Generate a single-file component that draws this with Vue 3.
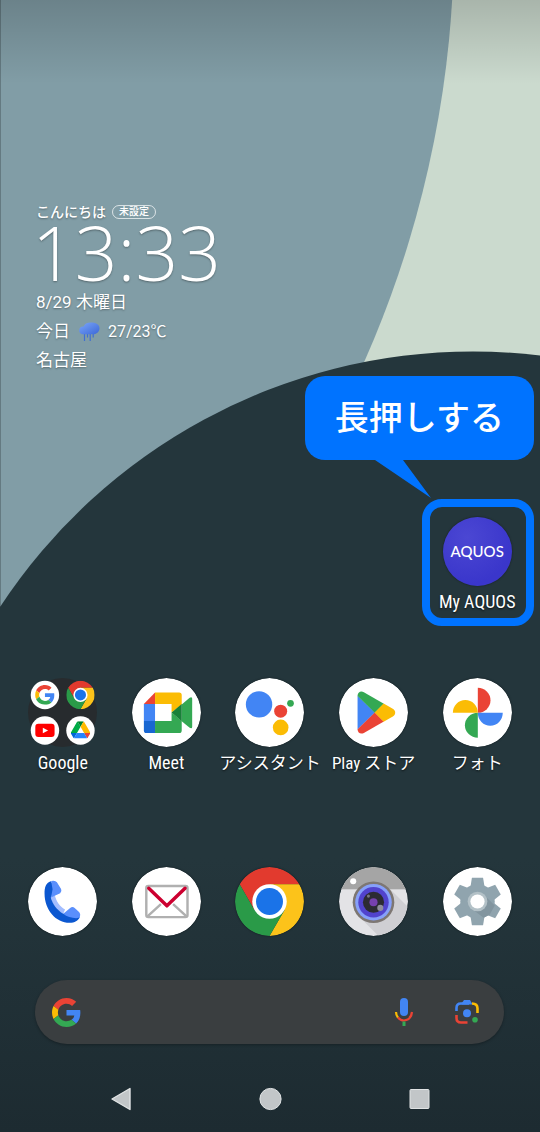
<script setup>
const gPaths = [
  { fill: '#ea4335', d: 'M24 9.5c3.54 0 6.71 1.22 9.21 3.6l6.85-6.85C35.9 2.38 30.47 0 24 0 14.62 0 6.51 5.38 2.56 13.22l7.98 6.19C12.43 13.72 17.74 9.5 24 9.5z' },
  { fill: '#4285f4', d: 'M46.98 24.55c0-1.57-.15-3.09-.38-4.55H24v9.02h12.94c-.58 2.96-2.26 5.48-4.78 7.18l7.73 6c4.51-4.18 7.09-10.36 7.09-17.65z' },
  { fill: '#fbbc05', d: 'M10.53 28.59c-.48-1.45-.76-2.99-.76-4.59s.27-3.14.76-4.59l-7.98-6.19C.92 16.46 0 20.12 0 24c0 3.88.92 7.54 2.56 10.78l7.97-6.19z' },
  { fill: '#34a853', d: 'M24 48c6.48 0 11.93-2.13 15.89-5.81l-7.73-6c-2.15 1.45-4.92 2.3-8.16 2.3-6.26 0-11.57-4.22-13.47-9.91l-7.98 6.19C6.51 42.62 14.62 48 24 48z' },
]
const drivePaths = [
  { fill: '#0066da', d: 'm6.6 66.85 3.85 6.65c.8 1.4 1.95 2.5 3.3 3.3l13.75-23.8h-27.5c0 1.55.4 3.1 1.2 4.5z' },
  { fill: '#00ac47', d: 'm43.65 25-13.75-23.8c-1.35.8-2.5 1.9-3.3 3.3l-25.4 44a9.06 9.06 0 0 0 -1.2 4.5h27.5z' },
  { fill: '#ea4335', d: 'm73.55 76.8c1.35-.8 2.5-1.9 3.3-3.3l1.6-2.75 7.65-13.25c.8-1.4 1.2-2.95 1.2-4.5h-27.502l5.852 11.5z' },
  { fill: '#00832d', d: 'm43.65 25 13.75-23.8c-1.35-.8-2.9-1.2-4.5-1.2h-18.5c-1.6 0-3.15.45-4.5 1.2z' },
  { fill: '#2684fc', d: 'm59.8 53h-32.3l-13.75 23.8c1.35.8 2.9 1.2 4.5 1.2h50.8c1.6 0 3.15-.45 4.5-1.2z' },
  { fill: '#ffba00', d: 'm73.4 26.5-12.7-22c-.8-1.4-1.95-2.5-3.3-3.3l-13.75 23.8 16.15 28h27.45c0-1.55-.4-3.1-1.2-4.5z' },
]
</script>

<template>
  <main class="screen">
    <svg class="wallpaper" viewBox="0 0 540 1132" preserveAspectRatio="xMidYMin slice" aria-hidden="true">
      <defs>
        <linearGradient id="dark" x1="0" y1="350" x2="0" y2="1132" gradientUnits="userSpaceOnUse">
          <stop offset="0" stop-color="#24363c" />
          <stop offset=".65" stop-color="#24363c" />
          <stop offset="1" stop-color="#1d2b31" />
        </linearGradient>
        <linearGradient id="scrim" x1="0" y1="0" x2="0" y2="1">
          <stop offset="0" stop-color="#000" stop-opacity=".17" />
          <stop offset="1" stop-color="#000" stop-opacity="0" />
        </linearGradient>
      </defs>
      <rect width="540" height="1132" fill="#cbdace" />
      <circle cx="-591" cy="-62" r="1045" fill="#819da6" />
      <path d="M0 607A566 566 0 0 1 473 351.500A566 566 0 0 1 540 355.500V1132H0z" fill="url(#dark)" />
      <rect width="540" height="84" fill="url(#scrim)" />
      <rect width="1" height="607" fill="#000" fill-opacity=".22" />
    </svg>

    <section class="widget" aria-label="時計と天気">
      <div class="greeting">
        <span>こんにちは</span>
        <button type="button" class="pill">未設定</button>
      </div>
      <time class="time">13:33</time>
      <p class="line">8/29 木曜日</p>
      <p class="line weather">
        <span>今日</span>
        <svg width="22" height="20" viewBox="0 0 22 20" aria-hidden="true">
          <defs>
            <linearGradient id="cloud" x1="0" y1="0" x2="1" y2="1">
              <stop offset="0" stop-color="#7ba6f8" />
              <stop offset="1" stop-color="#3c68d8" />
            </linearGradient>
          </defs>
          <path d="M6.500 9v10M9.500 9v6.500M12.200 9v10M15.200 9v6.500" stroke="#3f6fd2" stroke-width="1.200" />
          <path d="M4 12.300A4 4 0 0 1 4.300 4.600C5.300 5 5.500 4.600 6 3.700C7.200 1.300 9.500 .5 12.500 .5C18 .5 21.500 2.500 21.500 6C21.500 10 18.500 12.300 14.500 12.300z" fill="url(#cloud)" />
        </svg>
        <span class="temp">27/23℃</span>
      </p>
      <p class="line">名古屋</p>
    </section>

    <section class="row pinned" aria-label="My AQUOS">
      <div class="target">
        <button type="button" class="app">
          <span class="icon aquos">AQUOS</span>
          <span class="label">My AQUOS</span>
        </button>
        <div class="frame"></div>
        <div class="callout" role="note">
          長押しする
          <svg class="tail" width="56" height="39" viewBox="0 0 56 39" aria-hidden="true">
            <path d="M0 0V1L56 39L28 1V0z" fill="#0073ff" />
          </svg>
        </div>
      </div>
    </section>

    <nav class="row apps" aria-label="アプリ">
      <button type="button" class="app">
        <svg class="icon folder" viewBox="0 0 68 68" aria-hidden="true">
          <circle cx="34" cy="34" r="34" fill="#272b2e" />
          <circle cx="16.700" cy="16.700" r="14" fill="#fff" />
          <svg x="7" y="7" width="19.400" height="19.400" viewBox="0 0 48 48">
            <path v-for="p in gPaths" :key="p.fill" :fill="p.fill" :d="p.d" />
          </svg>
          <svg x="37.700" y="2.700" width="28" height="28" viewBox="0 0 68 68">
            <path d="M4.600 17A34 34 0 0 1 63.400 17H34L19.300 42.500z" fill="#e23a2e" />
            <path d="M63.400 17A34 34 0 0 1 34 68L48.700 42.500L34 17z" fill="#fcc31a" />
            <path d="M34 68A34 34 0 0 1 4.600 17L19.300 42.500H48.700z" fill="#2a9a48" />
            <circle cx="34" cy="34" r="17" fill="#fff" />
            <circle cx="34" cy="34" r="13.300" fill="#1a73e8" />
          </svg>
          <circle cx="16.700" cy="51.700" r="14" fill="#fff" />
          <rect x="7.200" y="45.200" width="19" height="13" rx="3" fill="#f00" />
          <path d="M14.600 49L19.800 51.700L14.600 54.400z" fill="#fff" />
          <circle cx="51.700" cy="51.700" r="14" fill="#fff" />
          <svg x="42.300" y="42.600" width="19" height="17" viewBox="0 0 87.3 78">
            <path v-for="p in drivePaths" :key="p.fill" :fill="p.fill" :d="p.d" />
          </svg>
        </svg>
        <span class="label">Google</span>
      </button>

      <button type="button" class="app">
        <svg class="icon" viewBox="0 0 68 68" aria-hidden="true">
          <circle cx="34" cy="34" r="34" fill="#fff" />
          <path d="M22.700 14.300V25.700H11.700z" fill="#ea4335" />
          <path d="M22.700 14.300H46.500Q49 14.300 49 16.800V26L39 34V25.700H22.700z" fill="#fbbc04" />
          <path d="M11.700 25.700H22.700V42.300H11.700z" fill="#4285f4" />
          <path d="M11.700 42.300H22.700V54.300H14.200Q11.700 54.300 11.700 51.800z" fill="#1967d2" />
          <path d="M39 34L49 42.300V51.800Q49 54.300 46.500 54.300H22.700V42.300H39z" fill="#34a853" />
          <path d="M49 26L56.500 19.600Q59.300 17.800 59.300 20.500V48Q59.300 50.700 56.500 48.800L49 42.500z" fill="#34a853" />
          <path d="M39 34L49 25.700V42.500z" fill="#188038" />
        </svg>
        <span class="label">Meet</span>
      </button>

      <button type="button" class="app">
        <svg class="icon" viewBox="0 0 68 68" aria-hidden="true">
          <circle cx="34" cy="34" r="34" fill="#fff" />
          <circle cx="23.700" cy="26" r="13" fill="#4285f4" />
          <circle cx="45" cy="32.700" r="6.400" fill="#ea4335" />
          <circle cx="54.700" cy="25" r="3.300" fill="#34a853" />
          <circle cx="45" cy="48.700" r="7.700" fill="#fbbc04" />
        </svg>
        <span class="label kana">アシスタント</span>
      </button>

      <button type="button" class="app">
        <svg class="icon" viewBox="0 0 68 68" aria-hidden="true">
          <circle cx="34" cy="34" r="34" fill="#fff" />
          <path d="M18.300 17.500V50.700L35.500 34z" fill="#4285f4" />
          <path d="M18.300 17.700C18.300 14 21.500 12.400 24.500 14.100L44.200 25.300L35.300 34.200z" fill="#34a853" />
          <path d="M18.300 50.500C18.300 54.200 21.500 55.800 24.500 54.100L44.200 42.900L35.300 34z" fill="#ea4335" />
          <path d="M44 25.200L53 30.300C56.200 32.200 56.200 36 53 37.900L44 43L35.200 34.100z" fill="#fbbc04" />
        </svg>
        <span class="label kana">Play ストア</span>
      </button>

      <button type="button" class="app">
        <svg class="icon" viewBox="0 0 68 68" aria-hidden="true">
          <circle cx="34" cy="34" r="34" fill="#fff" />
          <path d="M34.300 9.700A12.500 12.300 0 0 1 34.300 34.300z" fill="#ea4335" />
          <path d="M34.300 34.300H58.900A12.300 12.700 0 0 1 34.300 34.300z" fill="#4285f4" />
          <path d="M34.300 34.300V58.900A12.700 12.300 0 0 1 34.300 34.300z" fill="#34a853" />
          <path d="M34.300 34.300H9.700A12.300 12.700 0 0 1 34.300 34.300z" fill="#fbbc04" />
        </svg>
        <span class="label kana">フォト</span>
      </button>
    </nav>

    <nav class="row dock" aria-label="ドック">
      <button type="button" class="app" aria-label="電話">
        <svg class="icon" viewBox="0 0 68 68" aria-hidden="true">
          <circle cx="34" cy="34" r="34" fill="#fff" />
          <path d="M22.500 29L26.500 28C28 34 31 38.500 36.500 42L34.800 46C27.500 42 23.500 37 22.500 29z" fill="#a3bdff" />
          <path d="M22.500 14C17.500 15.500 16.300 20 16.300 26C16.300 42 27.500 55 41 55C46 55 49.500 53 51 49.500L40 46L34.800 46C28 42 24 36 22.500 30L27 22z" fill="#0b57d0" />
          <path d="M22.800 13.900Q26.500 12.600 28.500 15L32.600 21.600Q33.700 24 31.700 25.800L22.700 30L24.200 22z" fill="#5a8ffc" />
          <path d="M34.800 46L41.500 40.300Q43.800 38.600 46 40.300L50.300 44.300Q52.300 46.500 50.800 49.800L47.500 50.500C43 50 38 49 34.800 46z" fill="#5a8ffc" />
        </svg>
      </button>

      <button type="button" class="app" aria-label="メール">
        <svg class="icon" viewBox="0 0 68 68" aria-hidden="true">
          <circle cx="34" cy="34" r="34" fill="#fff" />
          <path d="M15 49L28.500 36.500M54 49L40.500 36.500" stroke="#b0b0b0" stroke-width="2.400" />
          <rect x="14.100" y="18.800" width="40.600" height="30.600" rx="2" fill="none" stroke="#b0b0b0" stroke-width="2.400" />
          <path d="M16.500 21L34.400 38.300L52.300 21" fill="none" stroke="#cc0030" stroke-width="3.400" stroke-linecap="round" stroke-linejoin="round" />
        </svg>
      </button>

      <button type="button" class="app" aria-label="Chrome">
        <svg class="icon" viewBox="0 0 68 68" aria-hidden="true">
          <path d="M4.600 17A34 34 0 0 1 63.400 17H34L19.300 42.500z" fill="#e23a2e" />
          <path d="M63.400 17A34 34 0 0 1 34 68L48.700 42.500L34 17z" fill="#fcc31a" />
          <path d="M34 68A34 34 0 0 1 4.600 17L19.300 42.500H48.700z" fill="#2a9a48" />
          <circle cx="34" cy="34" r="17" fill="#fff" />
          <circle cx="34" cy="34" r="13.300" fill="#1a73e8" />
        </svg>
      </button>

      <button type="button" class="app" aria-label="カメラ">
        <svg class="icon" viewBox="0 0 68 68" aria-hidden="true">
          <defs>
            <clipPath id="cam"><circle cx="34" cy="34" r="34" /></clipPath>
          </defs>
          <g clip-path="url(#cam)">
            <rect width="68" height="68" fill="#e3e3e6" />
            <path d="M48.500 20L75 46.500V75H46L19.500 48.500z" fill="#cfcfd3" />
            <rect width="68" height="22" fill="#a5a5a5" />
          </g>
          <circle cx="14" cy="14" r="3" fill="#fff" />
          <circle cx="34" cy="34.700" r="20.500" fill="#7d7773" />
          <circle cx="34" cy="34.700" r="18" fill="#86a0fa" />
          <circle cx="34" cy="34.700" r="15" fill="#5143cd" />
          <circle cx="34" cy="34.700" r="10.400" fill="#2c2b33" />
          <circle cx="34" cy="34.700" r="4" fill="#7640ae" />
          <circle cx="40.700" cy="40.300" r="3" fill="#8f8f9c" />
          <circle cx="29" cy="28.700" r="1.500" fill="#777783" />
        </svg>
      </button>

      <button type="button" class="app" aria-label="設定">
        <svg class="icon" viewBox="0 0 68 68" aria-hidden="true">
          <circle cx="34" cy="34" r="34" fill="#fff" />
          <g fill="#90a4ae">
            <circle cx="34" cy="34" r="17" />
            <path d="M28.500 10.700H39.500L41 20V48L39.500 57.300H28.500L27 48V20z" />
            <path d="M28.500 10.700H39.500L41 20V48L39.500 57.300H28.500L27 48V20z" transform="rotate(60 34 34)" />
            <path d="M28.500 10.700H39.500L41 20V48L39.500 57.300H28.500L27 48V20z" transform="rotate(120 34 34)" />
          </g>
          <path d="M41 28L51 38L46 47L40 50L28 41z" fill="#82959f" />
          <circle cx="34" cy="34" r="9.700" fill="#b3c1c7" />
          <circle cx="34" cy="34" r="7" fill="#fff" />
        </svg>
      </button>
    </nav>

    <form class="search" role="search" @submit.prevent>
      <svg width="29" height="29" viewBox="0 0 48 48" aria-hidden="true">
        <path v-for="p in gPaths" :key="p.fill" :fill="p.fill" :d="p.d" />
      </svg>
      <input type="search" aria-label="検索" />
      <button type="button" class="tool" aria-label="音声検索">
        <svg width="28" height="28" viewBox="0 0 28 28" aria-hidden="true">
          <rect x="10" y="0" width="8" height="18" rx="4" fill="#4285f4" />
          <path d="M6 14Q6 17 8 19.500" fill="none" stroke="#fbbc04" stroke-width="2.200" />
          <path d="M8 19.500Q10.500 22.500 14 22.500Q21 22 22 14" fill="none" stroke="#ea4335" stroke-width="2.200" />
          <path d="M14 23.500V28" stroke="#34a853" stroke-width="3" />
        </svg>
      </button>
      <button type="button" class="tool" aria-label="画像検索">
        <svg width="28" height="28" viewBox="0 0 28 28" aria-hidden="true">
          <path d="M3.500 13V10Q3.500 5.500 8 5.500H16" fill="none" stroke="#4285f4" stroke-width="2.600" />
          <path d="M8.500 5.500L11 2H17L19.500 6.600H8.500z" fill="#4285f4" />
          <path d="M19 5.500Q24.500 5.500 24.500 10.500V15" fill="none" stroke="#fbbc04" stroke-width="2.600" />
          <path d="M3.500 17V20Q3.500 24.500 8 24.500H14.500" fill="none" stroke="#ea4335" stroke-width="2.600" />
          <circle cx="14" cy="15.200" r="4" fill="#4285f4" />
          <circle cx="22" cy="21.800" r="2.800" fill="#34a853" />
        </svg>
      </button>
    </form>

    <nav class="system" aria-label="システム">
      <button type="button" class="tool" aria-label="戻る">
        <svg width="24" height="24" viewBox="0 0 24 24" aria-hidden="true">
          <path d="M3 12L21 1.500V22.500z" fill="#c2c6c8" stroke="#e0e3e4" stroke-width="1.400" stroke-linejoin="round" />
        </svg>
      </button>
      <button type="button" class="tool" aria-label="ホーム">
        <svg width="24" height="24" viewBox="0 0 24 24" aria-hidden="true">
          <circle cx="12.500" cy="12" r="10.600" fill="#c2c6c8" stroke="#e0e3e4" stroke-width="1" />
        </svg>
      </button>
      <button type="button" class="tool" aria-label="最近使ったアプリ">
        <svg width="24" height="24" viewBox="0 0 24 24" aria-hidden="true">
          <rect x="3" y="2.500" width="19" height="19" rx="1" fill="#c2c6c8" stroke="#e0e3e4" stroke-width="1" />
        </svg>
      </button>
    </nav>
  </main>
</template>

<style>
body {
  margin: 0;
}
</style>

<style scoped>
.screen {
  position: relative;
  box-sizing: border-box;
  min-height: 100vh;
  padding: 202px 11px 21px;
  overflow: hidden;
  display: flex;
  flex-direction: column;
  color: #fff;
  font-family: Roboto, "Noto Sans CJK JP", sans-serif;
}
.wallpaper {
  position: absolute;
  inset: 0;
  width: 100%;
  height: 100%;
  z-index: -1;
}
button {
  margin: 0;
  padding: 0;
  border: 0;
  background: none;
  color: inherit;
  font: inherit;
  cursor: pointer;
}
.widget {
  padding-left: 25px;
  text-shadow: 0 1px 2px rgba(0, 0, 0, 0.35);
}
.greeting {
  display: flex;
  align-items: center;
  gap: 6px;
  font-size: 14px;
  line-height: 20px;
  font-weight: 500;
}
.pill {
  padding: 0 6px;
  border: 1px solid rgba(255, 255, 255, 0.7);
  border-radius: 8px;
  font-size: 10px;
  line-height: 12px;
}
.time {
  display: block;
  margin-left: -4px;
  font-family: "Open Sans", sans-serif;
  font-weight: 300;
  font-size: 75px;
  line-height: 60px;
}
.line {
  margin: 0;
  font-size: 17px;
  line-height: 29px;
}
.time + .line {
  margin-top: 6px;
}
.weather {
  display: flex;
  align-items: center;
  gap: 8px;
}
.temp {
  font-size: 16px;
}
.row {
  display: grid;
  grid-template-columns: repeat(5, minmax(0, 1fr));
}
.pinned {
  margin-top: 142px;
}
.apps {
  margin-top: 64px;
}
.dock {
  margin-top: 92px;
}
.app {
  display: flex;
  flex-direction: column;
  align-items: center;
  gap: 4px;
  width: 100%;
}
.icon {
  display: block;
  width: 69px;
  height: 69px;
  border-radius: 50%;
  box-shadow: 0 0 2px rgba(0, 0, 0, 0.5);
}
.folder {
  border-radius: 0;
  box-shadow: none;
}
.label {
  font-family: "Roboto Condensed", "Liberation Sans Narrow", Roboto, "Noto Sans CJK JP", sans-serif;
  font-size: 18px;
  line-height: 24px;
  white-space: nowrap;
  text-shadow: 0 1px 2px rgba(0, 0, 0, 0.7);
}
.kana {
  font-size: 17px;
}
.aquos {
  background: radial-gradient(circle at 35% 30%, #4b47d3, #3a36cb 70%);
  font-family: Lato, sans-serif;
  font-size: 15px;
  font-weight: 500;
  line-height: 69px;
  text-align: center;
}
.target {
  position: relative;
  grid-column: 5;
}
.frame {
  position: absolute;
  inset: -18px -5px -12px -3px;
  border: 8px solid #0073ff;
  border-radius: 20px;
  pointer-events: none;
}
.callout {
  position: absolute;
  right: -5px;
  bottom: calc(100% + 57px);
  padding: 20px 30px;
  border-radius: 20px;
  background: #0073ff;
  font-size: 34px;
  font-weight: 500;
  line-height: 44px;
  white-space: nowrap;
}
.tail {
  position: absolute;
  top: 100%;
  left: 70px;
  margin-top: -1px;
}
.search {
  display: flex;
  align-items: center;
  gap: 35px;
  height: 64px;
  margin: 44px 25px 0 24px;
  padding: 0 23px 0 17px;
  box-sizing: border-box;
  border-radius: 32px;
  background: #3a3e40;
  box-shadow: 0 1px 3px rgba(0, 0, 0, 0.3);
}
.search input {
  flex: 1;
  min-width: 0;
  height: 40px;
  padding: 0;
  border: 0;
  outline: 0;
  background: transparent;
  color: #fff;
  font: inherit;
}
.tool {
  display: block;
}
.tool svg {
  display: block;
}
.system {
  display: grid;
  grid-template-columns: repeat(3, 149px);
  justify-content: center;
  justify-items: center;
  margin-top: 43px;
}
</style>
